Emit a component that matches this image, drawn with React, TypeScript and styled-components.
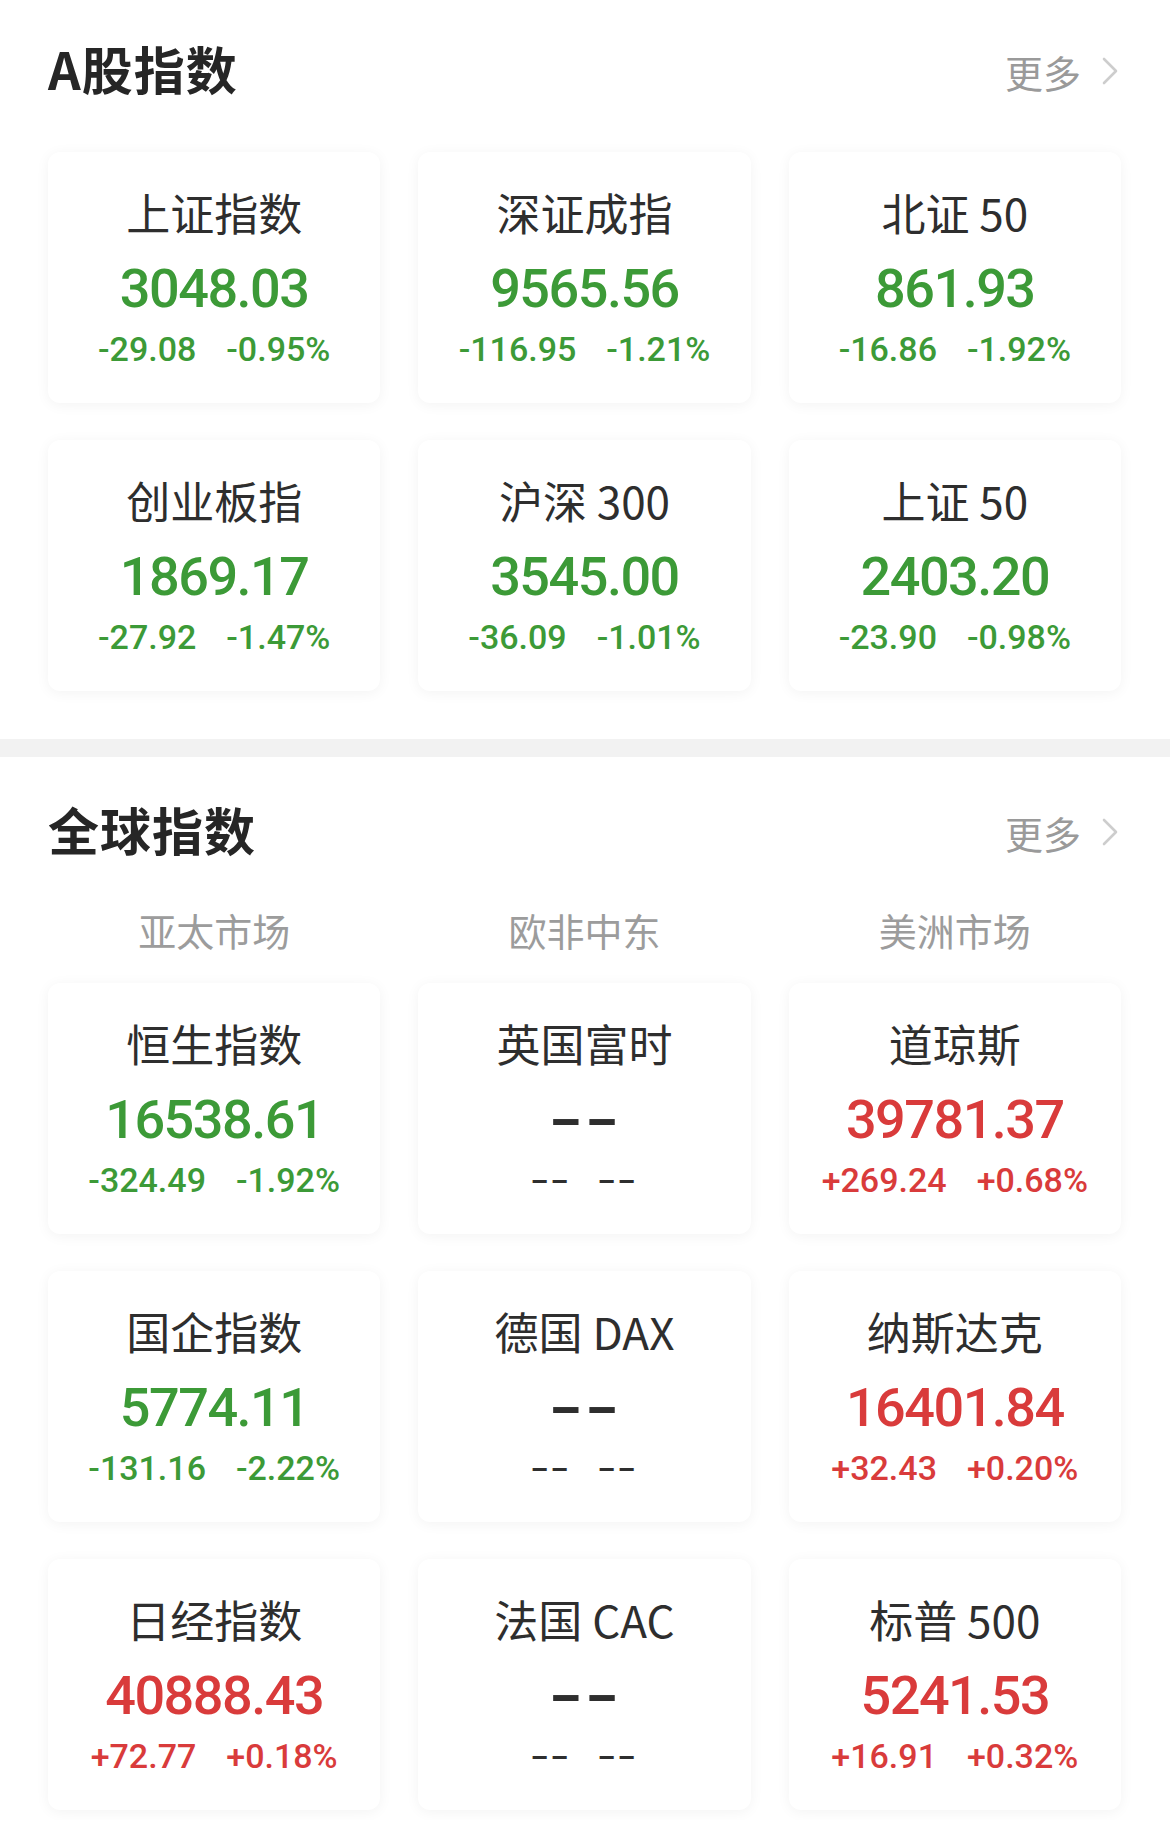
import { FunctionComponent } from "react";
import styled, { createGlobalStyle } from "styled-components";

type Trend = "up" | "down" | "none";

interface IndexItem {
  name: string;
  value?: string;
  change?: string;
  percent?: string;
  trend: Trend;
}

const aShares: IndexItem[] = [
  { name: "上证指数", value: "3048.03", change: "-29.08", percent: "-0.95%", trend: "down" },
  { name: "深证成指", value: "9565.56", change: "-116.95", percent: "-1.21%", trend: "down" },
  { name: "北证 50", value: "861.93", change: "-16.86", percent: "-1.92%", trend: "down" },
  { name: "创业板指", value: "1869.17", change: "-27.92", percent: "-1.47%", trend: "down" },
  { name: "沪深 300", value: "3545.00", change: "-36.09", percent: "-1.01%", trend: "down" },
  { name: "上证 50", value: "2403.20", change: "-23.90", percent: "-0.98%", trend: "down" }
];

const globalIndexes: IndexItem[] = [
  { name: "恒生指数", value: "16538.61", change: "-324.49", percent: "-1.92%", trend: "down" },
  { name: "英国富时", trend: "none" },
  { name: "道琼斯", value: "39781.37", change: "+269.24", percent: "+0.68%", trend: "up" },
  { name: "国企指数", value: "5774.11", change: "-131.16", percent: "-2.22%", trend: "down" },
  { name: "德国 DAX", trend: "none" },
  { name: "纳斯达克", value: "16401.84", change: "+32.43", percent: "+0.20%", trend: "up" },
  { name: "日经指数", value: "40888.43", change: "+72.77", percent: "+0.18%", trend: "up" },
  { name: "法国 CAC", trend: "none" },
  { name: "标普 500", value: "5241.53", change: "+16.91", percent: "+0.32%", trend: "up" }
];

const markets = ["亚太市场", "欧非中东", "美洲市场"];

const trendColor = (trend: Trend) =>
  trend === "up" ? "#d93b3b" : trend === "down" ? "#3c9a37" : "#2e2e2e";

const GlobalStyle = createGlobalStyle`
  * { box-sizing: border-box; }
  body {
    margin: 0;
    background: #fff;
    font-family: "Noto Sans CJK SC", "Noto Sans", sans-serif;
  }
`;

const Page = styled.div`
  width: 1170px;
  background: #fff;
`;

const Section = styled.section<{ $bottom: number }>`
  padding: 0 49px ${p => p.$bottom}px 48px;
`;

const Header = styled.div<{ $height: number; $lift: number }>`
  height: ${p => p.$height}px;
  padding-bottom: ${p => p.$lift}px;
  display: flex;
  align-items: center;
  justify-content: space-between;
`;

const Title = styled.h2`
  margin: 0;
  font-size: 51px;
  line-height: 60px;
  font-weight: 700;
  letter-spacing: 1px;
  color: #262626;
`;

const More = styled.a`
  display: flex;
  align-items: center;
  gap: 20px;
  padding-top: 6px;
  font-size: 38px;
  color: #9a9a9a;
  text-decoration: none;
  margin-right: 2px;
`;

const Divider = styled.div`
  height: 18px;
  background: #f2f2f2;
`;

const Grid = styled.div`
  display: grid;
  grid-template-columns: repeat(3, 1fr);
  column-gap: 38px;
  row-gap: 37px;
`;

const Tabs = styled(Grid)`
  height: 50px;
  margin-bottom: 28px;
`;

const Tab = styled.div`
  text-align: center;
  font-size: 38px;
  line-height: 50px;
  color: #9c9c9c;
`;

const Card = styled.div`
  height: 251px;
  background: #fff;
  border-radius: 12px;
  box-shadow: 0 2px 14px rgba(0, 0, 0, 0.05);
  display: flex;
  flex-direction: column;
  align-items: center;
  padding-top: 35px;
`;

const Name = styled.div`
  font-size: 44px;
  line-height: 50px;
  color: #2e2e2e;
  white-space: nowrap;
`;

const Value = styled.div<{ $trend: Trend }>`
  margin-top: 22px;
  font-family: Roboto, "Noto Sans", sans-serif;
  font-size: 54px;
  line-height: 60px;
  font-weight: 500;
  letter-spacing: -1.5px;
  color: ${p => trendColor(p.$trend)};
`;

const Dash = styled.span`
  display: inline-block;
  font-weight: 700;
  letter-spacing: 0;
  transform: scaleX(1.7);
`;

const Changes = styled.div<{ $trend: Trend }>`
  margin-top: 10px;
  display: flex;
  gap: 30px;
  font-family: Roboto, "Noto Sans", sans-serif;
  font-size: 34px;
  line-height: 40px;
  font-weight: 500;
  color: ${p => trendColor(p.$trend)};
`;

const SmallDash = styled.span`
  display: inline-block;
  letter-spacing: 1px;
  transform: scaleX(1.6);
  margin: 0 6px;
`;

const Chevron: FunctionComponent = () => (
  <svg width="18" height="28" viewBox="0 0 18 28" fill="none">
    <polyline points="3,2 15,14 3,26" stroke="#cdcdcd" strokeWidth="2.6" strokeLinecap="round" strokeLinejoin="round" />
  </svg>
);

const IndexCard: FunctionComponent<{ item: IndexItem }> = ({ item }) => (
  <Card>
    <Name>{item.name}</Name>
    <Value $trend={item.trend}>{item.value ?? <Dash>--</Dash>}</Value>
    <Changes $trend={item.trend}>
      {item.trend === "none" ? (
        <>
          <SmallDash>--</SmallDash>
          <SmallDash>--</SmallDash>
        </>
      ) : (
        <>
          <span>{item.change}</span>
          <span>{item.percent}</span>
        </>
      )}
    </Changes>
  </Card>
);

const SectionHeader: FunctionComponent<{ title: string; height: number; lift: number }> = ({
  title,
  height,
  lift
}) => (
  <Header $height={height} $lift={lift}>
    <Title>{title}</Title>
    <More href="#">
      更多
      <Chevron />
    </More>
  </Header>
);

export default function App() {
  return (
    <Page>
      <GlobalStyle />
      <Section $bottom={48}>
        <SectionHeader title="A股指数" height={152} lift={16} />
        <Grid>
          {aShares.map(item => (
            <IndexCard key={item.name} item={item} />
          ))}
        </Grid>
      </Section>
      <Divider />
      <Section $bottom={10}>
        <SectionHeader title="全球指数" height={148} lift={4} />
        <Tabs>
          {markets.map(m => (
            <Tab key={m}>{m}</Tab>
          ))}
        </Tabs>
        <Grid>
          {globalIndexes.map(item => (
            <IndexCard key={item.name} item={item} />
          ))}
        </Grid>
      </Section>
    </Page>
  );
}
